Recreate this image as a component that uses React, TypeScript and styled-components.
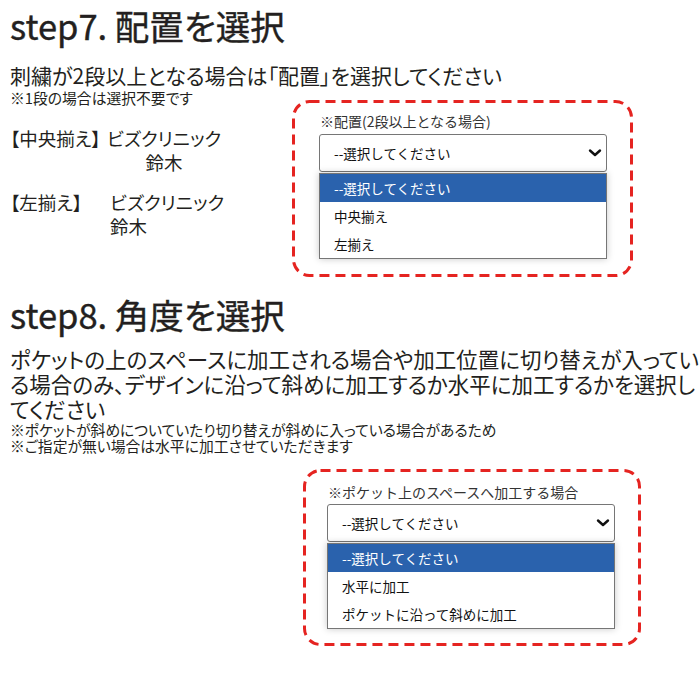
import React from 'react';
import styled, { createGlobalStyle } from 'styled-components';

const GlobalStyle = createGlobalStyle`
  html, body {
    margin: 0;
    padding: 0;
    background: #fff;
  }
  body {
    font-family: "Noto Sans CJK JP", "Noto Sans", sans-serif;
    color: #231f20;
  }
`;

const Page = styled.div`
  width: 700px;
  padding: 0 0 0 10px;
  box-sizing: border-box;
  overflow: hidden;
  font-feature-settings: "palt";
`;

const StepTitle = styled.h2<{ $mt: number }>`
  margin: ${({ $mt }) => $mt}px 0 0;
  font-size: 34.5px;
  line-height: 40px;
  font-weight: 400;
  color: #231f20;
  -webkit-text-stroke: 0.4px #231f20;
`;

const Lead = styled.p`
  margin: 18px 0 0;
  font-size: 21px;
  line-height: 24px;
`;

const Paragraph = styled.p`
  margin: 12px 0 0;
  font-size: 21.5px;
  line-height: 25px;
`;

const Note = styled.p<{ $mt: number }>`
  margin: ${({ $mt }) => $mt}px 0 0;
  font-size: 14.8px;
  line-height: 16px;
`;

const Row = styled.div`
  display: flex;
  align-items: flex-start;
`;

const LeftCol = styled.div`
  width: 282px;
  flex: none;
`;

const Examples = styled.div`
  margin-top: 20px;
  display: flex;
  flex-direction: column;
  gap: 16px;
`;

const Example = styled.div`
  display: grid;
  grid-template-columns: 97px auto;
  font-size: 18.5px;
  line-height: 24px;
`;

const ExText = styled.div<{ $align: 'center' | 'left'; $indent: number }>`
  text-align: ${({ $align }) => $align};
  padding-left: ${({ $indent }) => $indent}px;
  justify-self: start;
`;

const Box = styled.div<{ $w: number; $h: number; $mt: number; $ml: number; $pt: number; $pl: number }>`
  position: relative;
  flex: none;
  width: ${({ $w }) => $w}px;
  height: ${({ $h }) => $h}px;
  margin-top: ${({ $mt }) => $mt}px;
  margin-left: ${({ $ml }) => $ml}px;
  padding: ${({ $pt }) => $pt}px 0 0 ${({ $pl }) => $pl}px;
  box-sizing: border-box;
  font-feature-settings: normal;
`;

const DashFrame = styled.svg`
  position: absolute;
  left: 0;
  top: 0;
  pointer-events: none;
`;

const FieldLabel = styled.div<{ $mb: number }>`
  font-size: 14px;
  line-height: 18px;
  color: #333;
  margin-bottom: ${({ $mb }) => $mb}px;
  padding-left: 1px;
`;

const SelectBox = styled.div<{ $w: number }>`
  width: ${({ $w }) => $w}px;
  height: 38px;
  box-sizing: border-box;
  border: 1px solid #767676;
  border-radius: 3px;
  background: #fff;
  display: flex;
  align-items: center;
  justify-content: space-between;
  padding: 0 4px 0 14px;
  font-size: 13.5px;
  color: #111;
`;

const OptionList = styled.div<{ $w: number }>`
  width: ${({ $w }) => $w}px;
  margin-top: 1px;
  box-sizing: border-box;
  border: 1px solid #767676;
  background: #fff;
  box-shadow: 0 0 7px rgba(0, 0, 0, 0.22);
`;

const OptionItem = styled.div<{ $active?: boolean }>`
  height: 28px;
  display: flex;
  align-items: center;
  padding-left: 14px;
  font-size: 13.5px;
  background: ${({ $active }) => ($active ? '#2a62ad' : '#fff')};
  color: ${({ $active }) => ($active ? '#fff' : '#111')};
`;

const Chevron = () => (
  <svg width="14" height="10" viewBox="0 0 14 10">
    <path d="M2 2.5 L7 7 L12 2.5" fill="none" stroke="#111" strokeWidth="2.4" strokeLinecap="round" strokeLinejoin="round" />
  </svg>
);

type DashedSelectProps = {
  w: number;
  h: number;
  mt: number;
  ml: number;
  pt: number;
  pl: number;
  labelGap: number;
  label: string;
  options: string[];
};

const DashedSelect: React.FC<DashedSelectProps> = ({ w, h, mt, ml, pt, pl, labelGap, label, options }) => (
  <Box $w={w} $h={h} $mt={mt} $ml={ml} $pt={pt} $pl={pl}>
    <DashFrame width={w} height={h}>
      <rect x="1.5" y="1.5" width={w - 3} height={h - 3} rx="16" fill="none" stroke="#e52421" strokeWidth="3" strokeDasharray="10 6" />
    </DashFrame>
    <FieldLabel $mb={labelGap}>{label}</FieldLabel>
    <SelectBox $w={288}>
      <span>--選択してください</span>
      <Chevron />
    </SelectBox>
    <OptionList $w={288}>
      <OptionItem $active>--選択してください</OptionItem>
      {options.map(o => (
        <OptionItem key={o}>{o}</OptionItem>
      ))}
    </OptionList>
  </Box>
);

export default function App() {
  return (
    <Page>
      <GlobalStyle />
      <StepTitle $mt={5}>step7. 配置を選択</StepTitle>
      <Lead>刺繍が2段以上となる場合は「配置」を選択してください</Lead>
      <Row>
        <LeftCol>
          <Note $mt={3}>※1段の場合は選択不要です</Note>
          <Examples>
            <Example>
              <span>【中央揃え】</span>
              <ExText $align="center" $indent={0}>ビズクリニック<br />鈴木</ExText>
            </Example>
            <Example>
              <span>【左揃え】</span>
              <ExText $align="left" $indent={3}>ビズクリニック<br />鈴木</ExText>
            </Example>
          </Examples>
        </LeftCol>
        <DashedSelect
          w={341}
          h={177}
          mt={13}
          ml={0}
          pt={12}
          pl={27}
          labelGap={4}
          label="※配置(2段以上となる場合)"
          options={['中央揃え', '左揃え']}
        />
      </Row>
      <StepTitle $mt={17}>step8. 角度を選択</StepTitle>
      <Paragraph>
        ポケットの上のスペースに加工される場合や加工位置に切り替えが入っている場合のみ、デザインに沿って斜めに加工するか水平に加工するかを選択してください
      </Paragraph>
      <Note $mt={1}>※ポケットが斜めについていたり切り替えが斜めに入っている場合があるため</Note>
      <Note $mt={0}>※ご指定が無い場合は水平に加工させていただきます</Note>
      <DashedSelect
        w={338}
        h={177}
        mt={15}
        ml={293}
        pt={14}
        pl={24}
        labelGap={3}
        label="※ポケット上のスペースへ加工する場合"
        options={['水平に加工', 'ポケットに沿って斜めに加工']}
      />
    </Page>
  );
}
